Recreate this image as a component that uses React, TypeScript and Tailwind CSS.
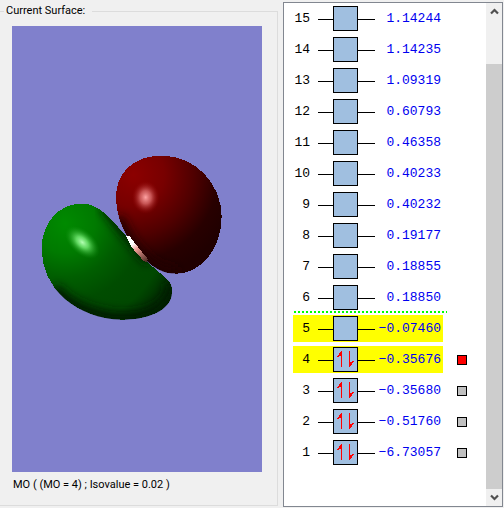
import React, { useState } from "react";

type Orbital = {
  index: number;
  energy: string;
  occupied?: boolean;
  highlighted?: boolean;
  surface?: "ready" | "current";
};

const orbitals: Orbital[] = [
  { index: 15, energy: "1.14244" },
  { index: 14, energy: "1.14235" },
  { index: 13, energy: "1.09319" },
  { index: 12, energy: "0.60793" },
  { index: 11, energy: "0.46358" },
  { index: 10, energy: "0.40233" },
  { index: 9, energy: "0.40232" },
  { index: 8, energy: "0.19177" },
  { index: 7, energy: "0.18855" },
  { index: 6, energy: "0.18850" },
  { index: 5, energy: "−0.07460", highlighted: true },
  { index: 4, energy: "−0.35676", occupied: true, highlighted: true, surface: "current" },
  { index: 3, energy: "−0.35680", occupied: true, surface: "ready" },
  { index: 2, energy: "−0.51760", occupied: true, surface: "ready" },
  { index: 1, energy: "−6.73057", occupied: true, surface: "ready" },
];

// lowest virtual orbital above the green divider
const DIVIDER_INDEX = 6;

const GREEN_LOBE =
  "M35 325C36 250 85 191 155 191C205 191 235 228 290 290L350 362C365 380 390 398 405 412C420 426 426 435 426 455C426 515 345 539 275 539C140 535 33 445 35 325Z";
const RED_LOBE =
  "M258 175C256 95 315 47 395 47C500 47 575 135 575 230C575 330 510 401 440 401C400 401 370 382 350 362C320 335 300 305 290 285C272 250 260 225 258 175Z";

const SurfaceView = () => (
  <svg
    viewBox="0 0 250 446"
    className="block h-full w-full"
    role="img"
    aria-label="Molecular orbital isosurface"
  >
    <defs>
      <radialGradient id="green" gradientUnits="userSpaceOnUse" cx="105" cy="250" r="360">
        <stop offset="0" stopColor="#008a00" />
        <stop offset="0.25" stopColor="#007a00" />
        <stop offset="0.45" stopColor="#005e00" />
        <stop offset="0.65" stopColor="#004c00" />
        <stop offset="0.85" stopColor="#004800" />
        <stop offset="1" stopColor="#002c00" />
      </radialGradient>
      <radialGradient id="red" gradientUnits="userSpaceOnUse" cx="310" cy="105" r="310">
        <stop offset="0" stopColor="#8c0000" />
        <stop offset="0.3" stopColor="#780000" />
        <stop offset="0.58" stopColor="#500000" />
        <stop offset="0.82" stopColor="#280000" />
        <stop offset="1" stopColor="#200000" />
      </radialGradient>
      <radialGradient id="greenShine">
        <stop offset="0" stopColor="#b4ffb4" />
        <stop offset="0.35" stopColor="#78ee78" stopOpacity="0.8" />
        <stop offset="1" stopColor="#109010" stopOpacity="0" />
      </radialGradient>
      <radialGradient id="redShine">
        <stop offset="0" stopColor="#ffa4a4" />
        <stop offset="0.4" stopColor="#e07070" stopOpacity="0.75" />
        <stop offset="1" stopColor="#900000" stopOpacity="0" />
      </radialGradient>
      <linearGradient id="seam" gradientUnits="userSpaceOnUse" x1="290" y1="288" x2="352" y2="365">
        <stop offset="0.3" stopColor="#ffffff" />
        <stop offset="0.5" stopColor="#ef9c94" />
        <stop offset="1" stopColor="#4a2820" />
      </linearGradient>
      <filter id="soft" x="-20%" y="-20%" width="140%" height="140%">
        <feGaussianBlur stdDeviation="14" />
      </filter>
      <clipPath id="greenClip">
        <path d={GREEN_LOBE} />
      </clipPath>
      <clipPath id="redClip">
        <path d={RED_LOBE} />
      </clipPath>
    </defs>
    <g transform="translate(18 114) scale(0.3333)">
      <path d={RED_LOBE} fill="url(#red)" shapeRendering="crispEdges" />
      <g clipPath="url(#redClip)">
        <path
          d="M262 235C300 330 370 405 440 401"
          fill="none"
          stroke="#200000"
          strokeWidth="38"
          filter="url(#soft)"
        />
      </g>
      <ellipse cx="347" cy="172" rx="42" ry="50" fill="url(#redShine)" />
      <path d={GREEN_LOBE} fill="url(#green)" shapeRendering="crispEdges" />
      <g clipPath="url(#greenClip)">
        <path
          d="M225 195C250 225 290 280 360 362"
          fill="none"
          stroke="#001c00"
          strokeWidth="36"
          filter="url(#soft)"
        />
        <path
          d="M432 425C445 475 400 525 330 538C240 556 120 520 65 450"
          fill="none"
          stroke="#001c00"
          strokeWidth="54"
          filter="url(#soft)"
        />
      </g>
      <ellipse
        cx="157"
        cy="307"
        rx="62"
        ry="36"
        transform="rotate(42 157 307)"
        fill="url(#greenShine)"
      />
      <path
        d="M288 288L298 288L325 322L354 358L350 367L339 361L306 323Z"
        fill="url(#seam)"
        shapeRendering="crispEdges"
      />
    </g>
  </svg>
);

const SpinPair = () => (
  <svg
    viewBox="0 0 23 23"
    className="block h-full w-full"
    fill="#ff0000"
    shapeRendering="crispEdges"
  >
    <path d="M7 3h1v16h-1zM6 4h1v4h-1zM5 5h1v3h-1zM4 7h1v2h-1zM3 8h1v1h-1z" />
    <path d="M15 3h1v16h-1zM16 14h1v4h-1zM17 14h1v3h-1zM18 13h1v2h-1zM19 13h1v1h-1z" />
  </svg>
);

const OrbitalRow = ({ orbital }: { orbital: Orbital }) => (
  <li>
    <div className="flex items-center">
      <div
        className={`flex w-[150px] items-center py-px ${
          orbital.highlighted ? "bg-[#ffff00]" : ""
        }`}
      >
        <span className="w-[17px] text-right text-black">{orbital.index}</span>
        <span className="mt-0.5 ml-2 h-px w-[15px] bg-black" />
        <span className="h-[25px] w-[25px] border border-black bg-[#a0bfe0]">
          {orbital.occupied && <SpinPair />}
        </span>
        <span className="mt-0.5 h-px w-[17px] bg-black" />
        <span className="flex-1 pr-0.5 text-right text-[#0000f0]">{orbital.energy}</span>
      </div>
      {orbital.surface && (
        <button
          type="button"
          aria-label={`Show surface ${orbital.index}`}
          className={`mt-px ml-3.5 h-2.5 w-2.5 border border-black ${
            orbital.surface === "current" ? "bg-[#ff0000]" : "bg-[#c0c0c0]"
          }`}
        />
      )}
    </div>
    <div className="h-1">
      {orbital.index === DIVIDER_INDEX && (
        <div className="h-0.5 w-[154px] bg-[repeating-linear-gradient(90deg,#fff_0_1px,#00ff00_1px_3px,#fff_3px_4px)]" />
      )}
    </div>
  </li>
);

const ScrollButton = ({ label, path }: { label: string; path: string }) => (
  <button
    type="button"
    aria-label={label}
    className="flex h-[17px] w-full items-center justify-center"
  >
    <svg viewBox="0 0 9 7" className="h-[7px] w-[9px]">
      <path d={path} fill="none" stroke="#505050" strokeWidth="2.2" />
    </svg>
  </button>
);

const App = () => {
  const [currentOrbital] = useState(4);

  return (
    <main className="flex h-screen bg-[#f0f0f0] font-[Roboto,sans-serif] text-[11px] leading-4 text-black">
      <fieldset className="mt-[3px] mb-0.5 flex min-w-0 flex-1 flex-col border border-l-0 border-[#dcdcdc] pl-3">
        <legend className="-ml-2 w-[88px] pl-0.5">Current Surface:</legend>
        <div className="flex h-full flex-col">
          <div className="mt-[7px] mr-[15px] min-h-0 flex-1 bg-[#8080cc]">
            <SurfaceView />
          </div>
          <p className="mt-[5px] mb-3 pl-px">
            MO ( (MO = {currentOrbital}) ; Isovalue = 0.02 )
          </p>
        </div>
      </fieldset>

      <section className="mt-0.5 mr-px mb-px ml-[5px] flex w-[220px] border border-[#828790] bg-white">
        <ul className="flex-1 overflow-hidden pt-0.5 pl-[9px] font-['Liberation_Mono',monospace] text-[13px]">
          {orbitals.map((orbital) => (
            <OrbitalRow key={orbital.index} orbital={orbital} />
          ))}
        </ul>
        <div className="flex w-4 flex-col bg-[#f0f0f0]">
          <ScrollButton label="Scroll up" path="M1 5.5L4.5 2L8 5.5" />
          <div className="mt-11 flex-1 bg-[#cdcdcd]" />
          <ScrollButton label="Scroll down" path="M1 1.5L4.5 5L8 1.5" />
        </div>
      </section>
    </main>
  );
};

export default App;
